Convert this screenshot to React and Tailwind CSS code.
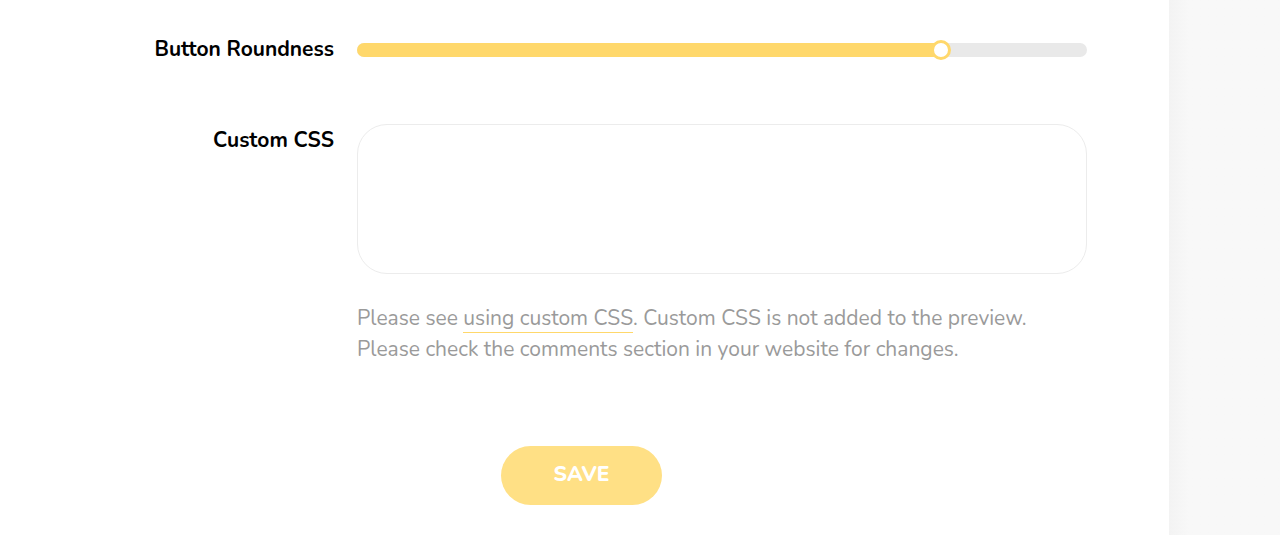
export default function App() {
  const value = 80
  return (
    <div className="flex h-[535px] w-full overflow-hidden bg-white font-['Nunito','Lato','Noto_Sans',sans-serif]">
      <div className="w-[1169px] shrink-0">
        <div className="flex items-center pt-[34px]">
          <div className="w-[334px] text-right text-[21px] font-bold text-black">Button Roundness</div>
          <div className="ml-[23px] relative h-[14px] w-[730px] rounded-full bg-[#e9e9e9]">
            <div className="h-full rounded-full bg-[#ffd86b]" style={{ width: `${value}%` }} />
            <div
              className="absolute top-1/2 h-[20px] w-[20px] -translate-x-1/2 -translate-y-1/2 rounded-full border-[3px] border-[#ffd86b] bg-white"
              style={{ left: `${value}%` }}
            />
          </div>
        </div>

        <div className="mt-[58px] flex items-start">
          <div className="w-[334px] pt-[1px] text-right text-[21px] font-bold text-black">Custom CSS</div>
          <div className="ml-[23px] w-[730px]">
            <textarea className="block h-[150px] w-full resize-none rounded-[30px] border border-[#ececec] bg-white p-5 outline-none" />
            <p className="mt-[29px] text-[21px] leading-[31px] text-[#9a9a9a]">
              Please see{' '}
              <a href="#" className="border-b border-b-[#ffd86b]">using custom CSS</a>
              . Custom CSS is not added to the preview.
              <br />
              Please check the comments section in your website for changes.
            </p>
          </div>
        </div>

        <div className="mt-[81px] pl-[501px]">
          <button className="h-[59px] w-[161px] rounded-full bg-[#ffe085] text-[21px] font-extrabold text-white">SAVE</button>
        </div>
      </div>
      <div className="flex-1 bg-gradient-to-r from-[#f3f3f3] to-[#f8f8f8] to-[20px]" />
    </div>
  )
}
